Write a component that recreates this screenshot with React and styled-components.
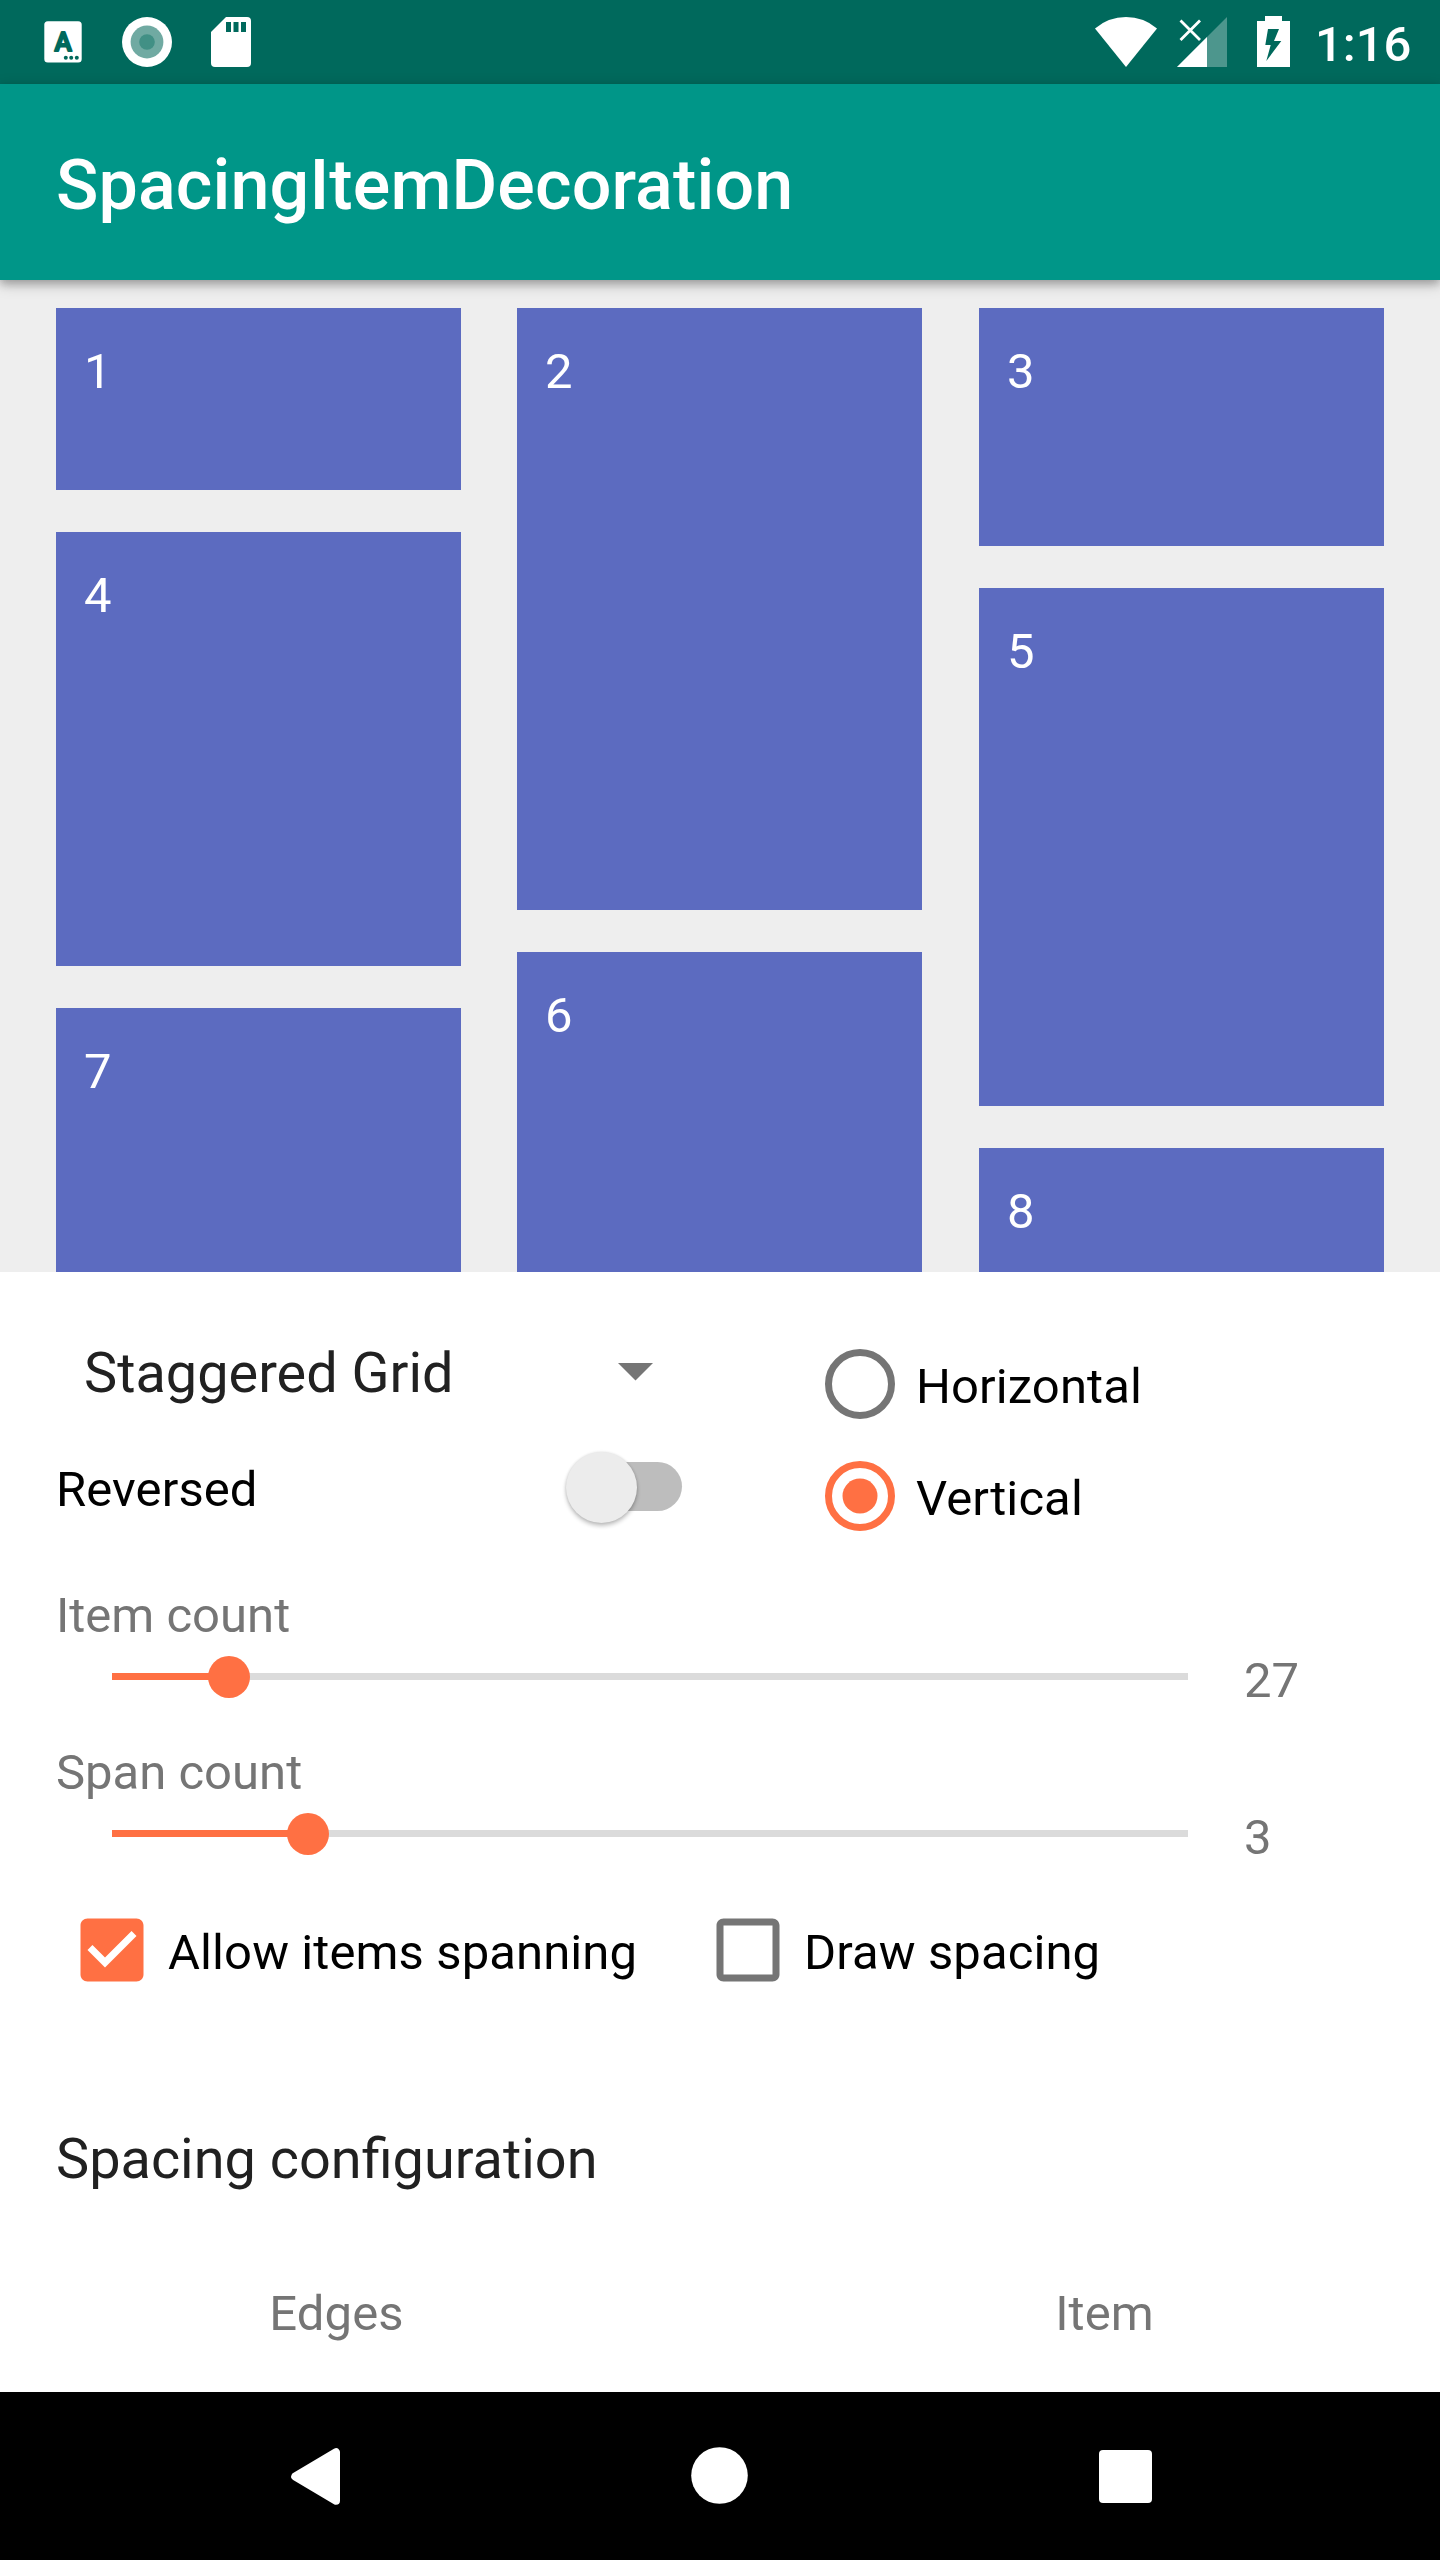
import React from "react";
import styled, { createGlobalStyle } from "styled-components";

const GlobalStyle = createGlobalStyle`
  * { box-sizing: border-box; }
  body { margin: 0; background: #fff; }
`;

const accent = "#ff7043";

const Screen = styled.div`
  width: 1440px;
  height: 2560px;
  display: flex;
  flex-direction: column;
  overflow: hidden;
  background: #fff;
  color: #000;
  font-family: Roboto, "Liberation Sans", sans-serif;
  font-size: 49px;
  line-height: 57px;
  white-space: nowrap;
`;

const StatusBar = styled.header`
  height: 84px;
  flex: none;
  display: flex;
  justify-content: space-between;
  background: #00695c;
  color: #fff;
`;

const StatusIcons = styled.svg`
  display: block;
  flex: none;
`;

const StatusRight = styled.div`
  display: flex;
`;

const Clock = styled.time`
  width: 125px;
  padding-top: 16px;
  font-weight: 500;
`;

const Toolbar = styled.div`
  height: 196px;
  flex: none;
  padding: 60px 56px 0;
  background: #009688;
  box-shadow: 0 4px 14px rgba(0, 0, 0, 0.22), 0 4px 8px rgba(0, 0, 0, 0.2);
  z-index: 1;
`;

const Title = styled.h1`
  margin: 0;
  color: #fff;
  font-size: 70px;
  line-height: 82px;
  font-weight: 500;
  letter-spacing: 0.13px;
`;

const Grid = styled.main`
  height: 992px;
  flex: none;
  display: grid;
  grid-template-columns: 461px 462px 405px;
  padding: 28px 56px 0;
  overflow: hidden;
  background: #eee;
`;

const GridColumn = styled.div`
  display: flex;
  flex-direction: column;
  gap: 42px;
`;

const Tile = styled.div`
  width: 405px;
  height: ${(p) => p.$height}px;
  flex: none;
  padding: 35px 28px 0;
  background: #5c6bc0;
  color: #fff;
`;

const Panel = styled.section`
  height: 1120px;
  flex: none;
  overflow: hidden;
  padding: 56px 56px 0;
`;

const TopControls = styled.div`
  display: grid;
  grid-template-columns: 762px auto;
  height: 224px;
`;

const Spinner = styled.div`
  display: flex;
  justify-content: space-between;
  width: 597px;
  height: 124px;
  padding: 12px 0 0 28px;
  color: #212121;
  font-size: 55.85px;
  line-height: 66px;
`;

const Arrow = styled.svg`
  margin-top: 23px;
`;

const SwitchRow = styled.div`
  display: flex;
  justify-content: space-between;
  width: 626px;
`;

const SwitchLabel = styled.span`
  padding-top: 9px;
  letter-spacing: 0.1px;
`;

const SwitchTrack = styled.span`
  display: flex;
  align-items: center;
  width: 114px;
  height: 49px;
  margin-top: 10px;
  border-radius: 25px;
  background: #bdbdbd;
`;

const SwitchThumb = styled.span`
  width: 71px;
  height: 71px;
  flex: none;
  margin-left: -2px;
  margin-top: 2px;
  border-radius: 50%;
  background: #ececec;
  box-shadow: 0 3px 4px rgba(0, 0, 0, 0.24), 0 0 3px rgba(0, 0, 0, 0.12);
`;

const Option = styled.label`
  display: flex;
  align-items: center;
  gap: 14px;
  height: ${(p) => p.$height || 112}px;
`;

const OptionText = styled.span`
  padding-top: 5px;
  letter-spacing: 0.1px;
`;

const SliderGroup = styled.div`
  height: 157px;
  color: #757575;
`;

const SliderRow = styled.div`
  display: flex;
  justify-content: space-between;
  padding-left: 56px;
`;

const SliderValue = styled.span`
  width: 140px;
  padding-top: 8px;
`;

const SliderTrack = styled.div`
  display: flex;
  align-items: center;
  width: 1076px;
  height: 7px;
  margin-top: 29px;
  background: #dbdbdb;
`;

const SliderFill = styled.div`
  height: 7px;
  background: ${accent};
`;

const SliderThumb = styled.div`
  width: 42px;
  height: 42px;
  flex: none;
  margin-left: -21px;
  margin-top: 1px;
  border-radius: 50%;
  background: ${accent};
`;

const Sliders = styled.div`
  padding-top: 35px;
`;

const CheckRow = styled.div`
  display: grid;
  grid-template-columns: 636px auto;
  padding-left: 14px;
  margin-top: 7px;
`;

const SectionTitle = styled.h2`
  margin: 134px 0 0;
  color: #212121;
  font-size: 55.85px;
  line-height: 66px;
  font-weight: 400;
`;

const Headings = styled.div`
  display: grid;
  grid-template-columns: 561px 975px;
  margin-top: 93px;
  color: #757575;
  text-align: center;
  letter-spacing: 0.1px;
`;

const NavBar = styled.nav`
  height: 168px;
  flex: none;
  background: #000;
`;

function Radio({ checked }) {
  const color = checked ? accent : "#757575";
  return (
    <svg width="84" height="84" viewBox="0 0 24 24">
      <circle cx="12" cy="12" r="9" fill="none" stroke={color} strokeWidth="2" />
      {checked && <circle cx="12" cy="12" r="5" fill={color} />}
    </svg>
  );
}

function Checkbox({ checked }) {
  return (
    <svg width="84" height="84" viewBox="0 0 24 24">
      {checked ? (
        <path
          fill={accent}
          d="M19 3H5c-1.11 0-2 .9-2 2v14c0 1.1.89 2 2 2h14c1.11 0 2-.9 2-2V5c0-1.1-.89-2-2-2zm-9 14l-5-5 1.41-1.41L10 14.17l7.59-7.59L19 8l-9 9z"
        />
      ) : (
        <path
          fill="#757575"
          d="M19 5v14H5V5h14m0-2H5c-1.1 0-2 .9-2 2v14c0 1.1.9 2 2 2h14c1.1 0 2-.9 2-2V5c0-1.1-.9-2-2-2z"
        />
      )}
    </svg>
  );
}

function Slider({ label, value, ratio }) {
  return (
    <SliderGroup>
      <div>{label}</div>
      <SliderRow>
        <SliderTrack>
          <SliderFill style={{ width: `${ratio * 100}%` }} />
          <SliderThumb />
        </SliderTrack>
        <SliderValue>{value}</SliderValue>
      </SliderRow>
    </SliderGroup>
  );
}

const columns = [
  [[1, 182], [4, 434], [7, 400]],
  [[2, 602], [6, 400]],
  [[3, 238], [5, 518], [8, 400]],
];

export default function App() {
  return (
    <Screen>
      <GlobalStyle />
      <StatusBar>
        <StatusIcons width="300" height="84" fill="#fff">
          <rect x="44.3" y="21.3" width="37.4" height="41.2" rx="3.5" />
          <text
            x="63"
            y="50.8"
            textAnchor="middle"
            fontFamily="Roboto, sans-serif"
            fontWeight="500"
            fontSize="26"
            fill="#00695c"
            stroke="#00695c"
            strokeWidth="2"
            strokeLinejoin="round"
          >
            A
          </text>
          <g fill="#00695c">
            <circle cx="65.8" cy="57.8" r="2" />
            <circle cx="71.2" cy="57.8" r="2" />
            <circle cx="76.8" cy="57.8" r="2" />
          </g>
          <circle cx="147" cy="42" r="25" />
          <circle cx="147" cy="42" r="16.4" fill="#70aaa2" />
          <circle cx="147" cy="42" r="7.8" fill="#419085" />
          <path d="M226 17H247a4 4 0 0 1 4 4V63a4 4 0 0 1-4 4H215a4 4 0 0 1-4-4V32Z" />
          <path fill="#00695c" d="M226 22h5v10h-5zM233.5 22h5v10h-5zM241 22h5v10h-5z" />
        </StatusIcons>
        <StatusRight>
          <StatusIcons width="245" height="84" viewBox="1070 0 245 84" fill="#fff">
            <path d="M1126 67L1095 28.4Q1108.5 17 1126 17T1157 28.4Z" />
            <path d="M1227 17V67H1177Z" opacity="0.3" />
            <path d="M1207 37V67H1177Z" />
            <path d="M1180.5 20.5L1200 40M1200 20.5L1180.5 40" stroke="#fff" strokeWidth="2.8" />
            <path d="M1265 16h17v5h8v46h-33V21h8Z" />
            <path fill="#00695c" d="M1268 29h11l-5 12h7.3L1266.3 61l4.4-16h-5.4Z" />
          </StatusIcons>
          <Clock>1:16</Clock>
        </StatusRight>
      </StatusBar>
      <Toolbar>
        <Title>SpacingItemDecoration</Title>
      </Toolbar>
      <Grid>
        {columns.map((tiles, i) => (
          <GridColumn key={i}>
            {tiles.map(([n, h]) => (
              <Tile key={n} $height={h}>{n}</Tile>
            ))}
          </GridColumn>
        ))}
      </Grid>
      <Panel>
        <TopControls>
          <div>
            <Spinner>
              <span>Staggered Grid</span>
              <Arrow width="35" height="18">
                <path d="M0 0H35L17.5 17.5Z" fill="#757575" />
              </Arrow>
            </Spinner>
            <SwitchRow>
              <SwitchLabel>Reversed</SwitchLabel>
              <SwitchTrack>
                <SwitchThumb />
              </SwitchTrack>
            </SwitchRow>
          </div>
          <div>
            <Option>
              <Radio />
              <OptionText>Horizontal</OptionText>
            </Option>
            <Option>
              <Radio checked />
              <OptionText>Vertical</OptionText>
            </Option>
          </div>
        </TopControls>
        <Sliders>
          <Slider label="Item count" value={27} ratio={26 / 240} />
          <Slider label="Span count" value={3} ratio={2 / 11} />
        </Sliders>
        <CheckRow>
          <Option $height={84}>
            <Checkbox checked />
            <OptionText>Allow items spanning</OptionText>
          </Option>
          <Option $height={84}>
            <Checkbox />
            <OptionText>Draw spacing</OptionText>
          </Option>
        </CheckRow>
        <SectionTitle>Spacing configuration</SectionTitle>
        <Headings>
          <span>Edges</span>
          <span>Item</span>
        </Headings>
      </Panel>
      <NavBar>
        <svg width="1440" height="168" fill="#fff">
          <path
            d="M295.200 84.500L336 60.300V108.700Z"
            stroke="#fff"
            strokeWidth="8"
            strokeLinejoin="round"
          />
          <circle cx="719.5" cy="83.5" r="28.3" />
          <rect x="1099" y="58" width="53" height="53" rx="4" />
        </svg>
      </NavBar>
    </Screen>
  );
}
